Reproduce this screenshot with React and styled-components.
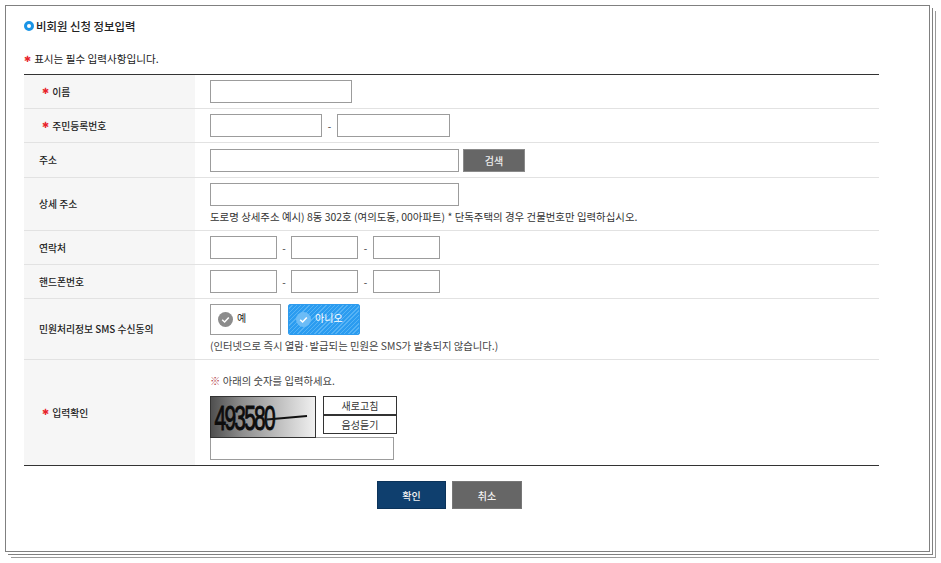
import React from "react";
import styled, { createGlobalStyle } from "styled-components";

const Global = createGlobalStyle`
  html, body { margin: 0; padding: 0; background: #fff; }
  body { font-family: "Noto Sans CJK KR", "Noto Sans", sans-serif; color: #222; font-size: 10px; }
`;

const Page = styled.div`
  box-sizing: border-box;
  width: 941px;
  height: 563px;
  padding: 5px 0 0 5px;
  overflow: hidden;
`;
const Sheet = styled.main`
  box-sizing: border-box;
  width: 925px;
  height: 547px;
  padding: 11px 50px 0 18px;
  background: #fff;
  border: 1px solid #808080;
  box-shadow: 2px 2px 0 #fff, 3px 3px 0 #808080, 5px 5px 0 #fff, 6px 6px 0 #999;
`;
const Title = styled.h1`
  display: flex;
  align-items: center;
  gap: 2px;
  height: 18px;
  margin: 0;
  font-size: 11.4px;
  font-weight: 500;
  line-height: 18px;
  color: #222;
`;
const Ring = styled.span`
  box-sizing: border-box;
  width: 10px;
  height: 10px;
  border: 3px solid #1a94e6;
  border-radius: 50%;
`;
const Legend = styled.p`
  display: flex;
  align-items: center;
  gap: 3px;
  height: 16px;
  margin: 16px 0 7px;
  font-size: 10.6px;
  line-height: 16px;
`;
const Star = styled.span`
  color: #e8232c;
  font-size: 8.5px;
  line-height: 1;
  font-family: "DejaVu Sans", sans-serif;
`;
const Table = styled.section`
  width: 855px;
  border-top: 1px solid #333;
  border-bottom: 1px solid #333;
`;
const Row = styled.div`
  display: grid;
  grid-template-columns: 171px 1fr;
  height: ${(p) => p.$h}px;
  box-sizing: border-box;
  border-bottom: ${(p) => (p.$last ? "none" : "1px solid #e2e2e2")};
`;
const Label = styled.div`
  display: flex;
  align-items: center;
  gap: 3px;
  padding-left: ${(p) => (p.$req ? 18 : 15)}px;
  background: #f6f6f6;
  font-size: 9.8px;
  font-weight: 500;
  color: #222;
`;
const Field = styled.div`
  display: flex;
  flex-direction: column;
  justify-content: ${(p) => (p.$top ? "flex-start" : "center")};
  gap: ${(p) => p.$gap || 0}px;
  padding: ${(p) => p.$pt || 0}px 0 0 15px;
`;
const Line = styled.div`
  display: flex;
  align-items: center;
`;
const Input = styled.input`
  box-sizing: border-box;
  display: block;
  width: ${(p) => p.$w}px;
  height: 23px;
  margin: 0;
  margin-top: ${(p) => p.$mt || 0}px;
  padding: 0 4px;
  background: #fff;
  border: 1px solid #9c9c9c;
  border-radius: 0;
  outline: none;
`;
const Dash = styled.span`
  width: ${(p) => p.$w}px;
  text-align: center;
  font-size: 10px;
  color: #333;
`;
const Help = styled.p`
  margin: 0;
  font-size: 10.45px;
  line-height: 14px;
  color: #333;
  white-space: nowrap;
`;
const SearchButton = styled.button`
  box-sizing: border-box;
  width: 62px;
  height: 23px;
  margin-left: 4px;
  padding: 0;
  background: #666;
  border: 1px solid #8a8a8a;
  color: #eee;
  font: 500 10px "Noto Sans CJK KR", sans-serif;
`;
const Choice = styled.label`
  box-sizing: border-box;
  display: flex;
  align-items: center;
  gap: 4px;
  width: ${(p) => p.$w}px;
  height: 31px;
  margin-right: 7px;
  padding: 0 0 5px 7px;
  font-size: 10px;
  border-radius: ${(p) => (p.$on ? "2px" : "0")};
  color: ${(p) => (p.$on ? "#fff" : "#222")};
  border: 1px solid ${(p) => (p.$on ? "#2e9bee" : "#9c9c9c")};
  background: ${(p) =>
    p.$on
      ? "repeating-linear-gradient(135deg, #2b9cf0 0 2px, #56b3f5 2px 3px)"
      : "#fff"};
  & > svg { margin-top: 5px; }
`;
const Notice = styled.p`
  margin: 0;
  font-size: 10.35px;
  line-height: 14px;
  color: #444;
  white-space: nowrap;
`;
const Mark = styled.span`
  color: #b3444c;
`;
const CaptchaRow = styled.div`
  display: flex;
  align-items: flex-start;
  gap: 7px;
  margin-top: 8px;
`;
const Captcha = styled.div`
  position: relative;
  box-sizing: border-box;
  width: 106px;
  height: 42px;
  border: 1px solid #333;
  background: linear-gradient(90deg, #4f4f4f 0%, #8e8e8e 30%, #f0f0f0 100%);
  overflow: hidden;
  & > svg { position: absolute; left: 0; top: 0; }
`;
const CaptchaCode = styled.span`
  display: block;
  width: 110px;
  padding-left: 6px;
  font: 400 35px/41px "Liberation Sans", sans-serif;
  letter-spacing: -3px;
  color: #0c0c0c;
  -webkit-text-stroke: 1px #0c0c0c;
  transform: scaleX(0.6);
  transform-origin: 0 50%;
`;
const CaptchaActions = styled.div`
  display: flex;
  flex-direction: column;
`;
const CaptchaButton = styled.button`
  box-sizing: border-box;
  width: 74px;
  height: 19px;
  margin: 0;
  padding: 0;
  background: #fff;
  border: 1px solid #333;
  color: #333;
  font: 400 10px "Noto Sans CJK KR", sans-serif;
`;
const Actions = styled.div`
  display: flex;
  justify-content: center;
  gap: 6px;
  width: 855px;
  margin-top: 15px;
  padding-right: 4px;
  box-sizing: border-box;
`;
const ActionButton = styled.button`
  box-sizing: border-box;
  width: ${(p) => p.$w}px;
  height: 28px;
  padding: 0;
  background: ${(p) => p.$bg};
  border: 1px solid ${(p) => p.$line};
  color: #f2f2f2;
  font: 500 10px "Noto Sans CJK KR", sans-serif;
`;

const Check = ({ fill, stroke }) => (
  <svg width="15" height="15" viewBox="0 0 15 15" aria-hidden="true">
    <circle cx="7.5" cy="7.5" r="7.5" fill={fill} />
    <path d="M4.2 7.8 6.6 10 10.8 5.4" fill="none" stroke={stroke} strokeWidth="1.5" />
  </svg>
);

const Required = ({ children }) => (
  <Label $req>
    <Star>✱</Star>
    {children}
  </Label>
);

const Phone = () => (
  <Line>
    <Input $w={67} />
    <Dash $w={14}>-</Dash>
    <Input $w={67} />
    <Dash $w={15}>-</Dash>
    <Input $w={67} />
  </Line>
);

export default function App() {
  return (
    <Page>
      <Global />
      <Sheet>
        <Title>
          <Ring />
          비회원 신청 정보입력
        </Title>
        <Legend>
          <Star>✱</Star>
          표시는 필수 입력사항입니다.
        </Legend>
        <Table>
          <Row $h={34}>
            <Required>이름</Required>
            <Field>
              <Input $w={142} />
            </Field>
          </Row>
          <Row $h={34}>
            <Required>주민등록번호</Required>
            <Field>
              <Line>
                <Input $w={112} />
                <Dash $w={15}>-</Dash>
                <Input $w={113} />
              </Line>
            </Field>
          </Row>
          <Row $h={35}>
            <Label>주소</Label>
            <Field>
              <Line>
                <Input $w={249} />
                <SearchButton>검색</SearchButton>
              </Line>
            </Field>
          </Row>
          <Row $h={53}>
            <Label>상세 주소</Label>
            <Field $top $pt={5} $gap={4}>
              <Input $w={249} />
              <Help>도로명 상세주소 예시) 8동 302호 (여의도동, 00아파트) * 단독주택의 경우 건물번호만 입력하십시오.</Help>
            </Field>
          </Row>
          <Row $h={34}>
            <Label>연락처</Label>
            <Field>
              <Phone />
            </Field>
          </Row>
          <Row $h={34}>
            <Label>핸드폰번호</Label>
            <Field>
              <Phone />
            </Field>
          </Row>
          <Row $h={61}>
            <Label>민원처리정보 SMS 수신동의</Label>
            <Field $top $pt={5} $gap={4}>
              <Line>
                <Choice $w={71}>
                  <Check fill="#8c8c8c" stroke="#fff" />예
                </Choice>
                <Choice $w={72} $on>
                  <Check fill="#6cbcf6" stroke="#fff" />아니오
                </Choice>
              </Line>
              <Notice>(인터넷으로 즉시 열람·발급되는 민원은 SMS가 발송되지 않습니다.)</Notice>
            </Field>
          </Row>
          <Row $h={105} $last>
            <Required>입력확인</Required>
            <Field $top $pt={14}>
              <Notice>
                <Mark>※</Mark> 아래의 숫자를 입력하세요.
              </Notice>
              <CaptchaRow>
                <Captcha>
                  <CaptchaCode>493580</CaptchaCode>
                  <svg width="104" height="40" viewBox="0 0 104 40" aria-hidden="true">
                    <path d="M56 22.5 96 19" stroke="#111" strokeWidth="1.8" fill="none" />
                  </svg>
                </Captcha>
                <CaptchaActions>
                  <CaptchaButton>새로고침</CaptchaButton>
                  <CaptchaButton>음성듣기</CaptchaButton>
                </CaptchaActions>
              </CaptchaRow>
              <Input $w={184} $mt={-1} />
            </Field>
          </Row>
        </Table>
        <Actions>
          <ActionButton $w={69} $bg="#0f3f6e" $line="#0b335a">확인</ActionButton>
          <ActionButton $w={70} $bg="#666" $line="#777">취소</ActionButton>
        </Actions>
      </Sheet>
    </Page>
  );
}
